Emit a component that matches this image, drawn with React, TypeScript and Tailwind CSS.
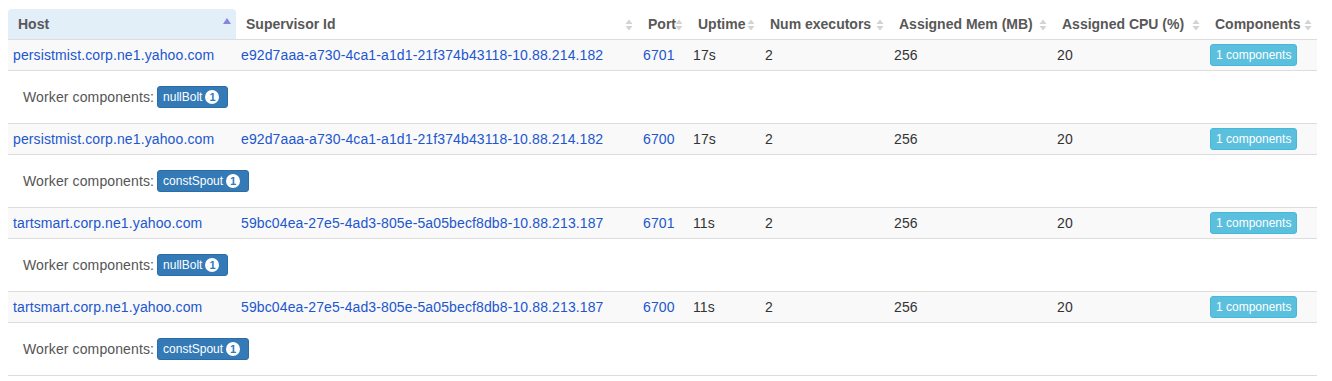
import React from "react";

type Row = { host: string; sup: string; port: string; uptime: string; comp: string };

const rows: Row[] = [
  { host: "persistmist.corp.ne1.yahoo.com", sup: "e92d7aaa-a730-4ca1-a1d1-21f374b43118-10.88.214.182", port: "6701", uptime: "17s", comp: "nullBolt" },
  { host: "persistmist.corp.ne1.yahoo.com", sup: "e92d7aaa-a730-4ca1-a1d1-21f374b43118-10.88.214.182", port: "6700", uptime: "17s", comp: "constSpout" },
  { host: "tartsmart.corp.ne1.yahoo.com", sup: "59bc04ea-27e5-4ad3-805e-5a05becf8db8-10.88.213.187", port: "6701", uptime: "11s", comp: "nullBolt" },
  { host: "tartsmart.corp.ne1.yahoo.com", sup: "59bc04ea-27e5-4ad3-805e-5a05becf8db8-10.88.213.187", port: "6700", uptime: "11s", comp: "constSpout" },
];

const headers = [
  "Host",
  "Supervisor Id",
  "Port",
  "Uptime",
  "Num executors",
  "Assigned Mem (MB)",
  "Assigned CPU (%)",
  "Components",
];

const widths = [228, 402, 50, 72, 129, 163, 153, 112];

function SortIcon({ active }: { active?: boolean }) {
  if (active) {
    return (
      <svg width="8" height="14" viewBox="0 0 8 14" className="absolute right-[5px] top-[8px]">
        <polygon points="0,7 4,1 8,7" fill="#8585df" />
      </svg>
    );
  }
  return (
    <svg width="8" height="14" viewBox="0 0 8 14" className="absolute right-[5px] top-[9px]">
      <polygon points="0.5,6 4,1.5 7.5,6" fill="#d3d3d3" />
      <polygon points="0.5,8 4,12.5 7.5,8" fill="#d3d3d3" />
    </svg>
  );
}

const link = "text-[#2256cf]";

export default function App() {
  return (
    <div
      className="pl-[8px] pt-[9px] bg-white min-h-screen"
      style={{ fontFamily: '"Liberation Sans", Arial, Helvetica, sans-serif' }}
    >
      <table className="table-fixed border-separate border-spacing-0 w-[1309px] text-[14px] text-[#333]">
        <colgroup>
          {widths.map((w, i) => (
            <col key={i} style={{ width: w }} />
          ))}
        </colgroup>
        <thead>
          <tr>
            {headers.map((h, i) => (
              <th
                key={h}
                className={
                  "relative p-0 text-left font-bold text-[#585858] border-b border-[#dddddd] " +
                  (i === 0 ? "bg-[#e2eef8] rounded-t-[4px]" : "")
                }
              >
                <div className="h-[30px] flex items-center pl-[10px] whitespace-nowrap">{h}</div>
                <SortIcon active={i === 0} />
              </th>
            ))}
          </tr>
        </thead>
        <tbody className="tracking-[0.12px]">
          {rows.map((r, idx) => (
            <React.Fragment key={idx}>
              <tr className="bg-[#f9f9f9]">
                <td className="p-0 border-b border-[#dddddd]">
                  <div className={"h-[30px] flex items-center px-[5px] whitespace-nowrap " + link}>{r.host}</div>
                </td>
                <td className="p-0 border-b border-[#dddddd]">
                  <div className={"h-[30px] flex items-center px-[5px] whitespace-nowrap " + link}>{r.sup}</div>
                </td>
                <td className="p-0 border-b border-[#dddddd]">
                  <div className={"h-[30px] flex items-center px-[5px] whitespace-nowrap " + link}>{r.port}</div>
                </td>
                <td className="p-0 border-b border-[#dddddd]">
                  <div className="h-[30px] flex items-center px-[5px] whitespace-nowrap">{r.uptime}</div>
                </td>
                <td className="p-0 border-b border-[#dddddd]">
                  <div className="h-[30px] flex items-center px-[5px] whitespace-nowrap">2</div>
                </td>
                <td className="p-0 border-b border-[#dddddd]">
                  <div className="h-[30px] flex items-center px-[5px] whitespace-nowrap">256</div>
                </td>
                <td className="p-0 border-b border-[#dddddd]">
                  <div className="h-[30px] flex items-center px-[5px] whitespace-nowrap">20</div>
                </td>
                <td className="p-0 border-b border-[#dddddd]">
                  <div className="h-[30px] flex items-center px-[5px] whitespace-nowrap tracking-normal">
                    <span className="inline-flex items-center h-[22px] px-[5px] rounded-[3px] border border-[#46b8da] bg-[#5bc0de] text-white text-[12px]">
                      1 components
                    </span>
                  </div>
                </td>
              </tr>
              <tr className="bg-white">
                <td colSpan={8} className="p-0 border-b border-[#dddddd]">
                  <div className="h-[52px] flex items-center pl-[15px] text-[#555] whitespace-nowrap">
                    <span>Worker components:</span>
                    <span className="ml-[3px] tracking-normal inline-flex items-center h-[22px] pl-[5px] pr-[8px] rounded-[3px] border border-[#2e6da4] bg-[#337ab7] text-white text-[12px]">
                      {r.comp}
                      <span className="ml-[3px] inline-flex items-center justify-center h-[14px] min-w-[14px] px-[3px] rounded-full bg-white text-[#337ab7] text-[11px] font-bold leading-none">
                        1
                      </span>
                    </span>
                  </div>
                </td>
              </tr>
            </React.Fragment>
          ))}
        </tbody>
      </table>
    </div>
  );
}
